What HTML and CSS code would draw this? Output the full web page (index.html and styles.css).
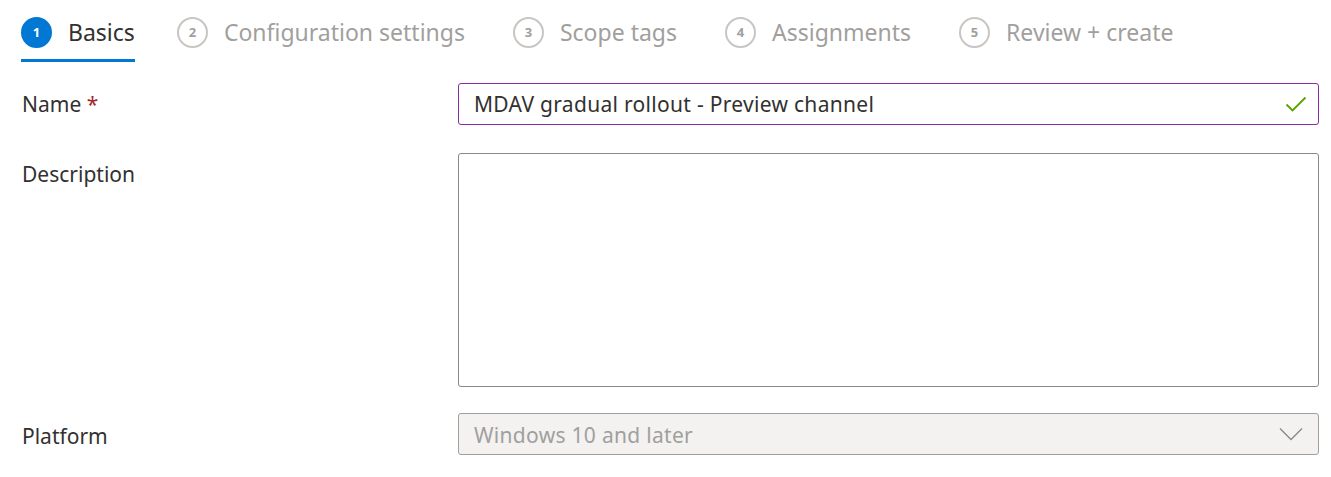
FILE: index.html
```html
<!DOCTYPE html>
<html lang="en">
<head>
<meta charset="utf-8">
<title>Create profile</title>
<link rel="stylesheet" href="styles.css">
</head>
<body>
<div class="page">
  <nav class="steps">
    <div class="step active"><span class="num">1</span><span class="label">Basics</span></div>
    <div class="step"><span class="num">2</span><span class="label">Configuration settings</span></div>
    <div class="step"><span class="num">3</span><span class="label">Scope tags</span></div>
    <div class="step"><span class="num">4</span><span class="label">Assignments</span></div>
    <div class="step"><span class="num">5</span><span class="label">Review + create</span></div>
  </nav>
  <div class="form">
    <div class="row row-name">
      <div class="field-label">Name <span class="req">*</span></div>
      <div class="input input-valid">
        <span class="value">MDAV gradual rollout - Preview channel</span>
        <svg class="check" width="22" height="18" viewBox="0 0 22 18"><path d="M1.5 9.5 L7.5 15.5 L20.5 2.5" fill="none" stroke="#57a300" stroke-width="1.8"/></svg>
      </div>
    </div>
    <div class="row row-desc">
      <div class="field-label">Description</div>
      <div class="textarea"></div>
    </div>
    <div class="row row-platform">
      <div class="field-label">Platform</div>
      <div class="input select-disabled">
        <span class="value">Windows 10 and later</span>
        <svg class="chev" width="24" height="14" viewBox="0 0 24 14"><path d="M1 1.5 L12 12.5 L23 1.5" fill="none" stroke="#8a8886" stroke-width="1.3"/></svg>
      </div>
    </div>
  </div>
</div>
</body>
</html>
```
FILE: styles.css
```css
* { box-sizing: border-box; }
html, body { margin: 0; padding: 0; background: #fff; }
body {
  font-family: "Noto Sans", "Open Sans", "Liberation Sans", sans-serif;
  color: #323130;
}
.page { width: 1331px; height: 477px; overflow: hidden; }

.steps {
  display: flex;
  align-items: stretch;
  padding-left: 21px;
  height: 62px;
}
.step {
  display: flex;
  align-items: center;
  gap: 16px;
  margin-right: 48px;
  height: 62px;
  padding-top: 5px;
  border-bottom: 3px solid transparent;
  color: #a19f9d;
  font-size: 23px;
}
.step.active { border-bottom-color: #0078d4; color: #323130; margin-right: 42px; }
.num {
  width: 31px;
  height: 31px;
  border-radius: 50%;
  border: 2px solid #c8c6c4;
  display: flex;
  align-items: center;
  justify-content: center;
  font-size: 13px;
  font-weight: 700;
  color: #a19f9d;
  flex-shrink: 0;
}
.step.active .num { background: #0078d4; border-color: #0078d4; color: #fff; }
.label { line-height: 1; padding-top: 1px; }

.form { padding: 21px 12px 0 22px; }
.row { display: flex; }
.field-label {
  width: 436px;
  flex-shrink: 0;
  font-size: 21px;
}
.row-name { height: 42px; align-items: center; }
.row-desc { margin-top: 28px; height: 234px; }
.row-desc .field-label { padding-top: 7px; }
.row-platform { margin-top: 26px; height: 42px; align-items: center; }
.row-platform .field-label { padding-top: 3px; }
.req { color: #a4262c; }

.input {
  flex: 1;
  height: 42px;
  border-radius: 3px;
  display: flex;
  align-items: center;
  justify-content: space-between;
  padding: 0 11px 0 15px;
  font-size: 21px;
  letter-spacing: 0.3px;
}
.input-valid { border: 1px solid #8a2da5; }
.textarea { flex: 1; height: 234px; border: 1px solid #8a8886; border-radius: 3px; }
.select-disabled { background: #f3f2f1; border: 1px solid #a19f9d; color: #a19f9d; padding-right: 15px; }
.select-disabled .value { padding-top: 2px; }
```
